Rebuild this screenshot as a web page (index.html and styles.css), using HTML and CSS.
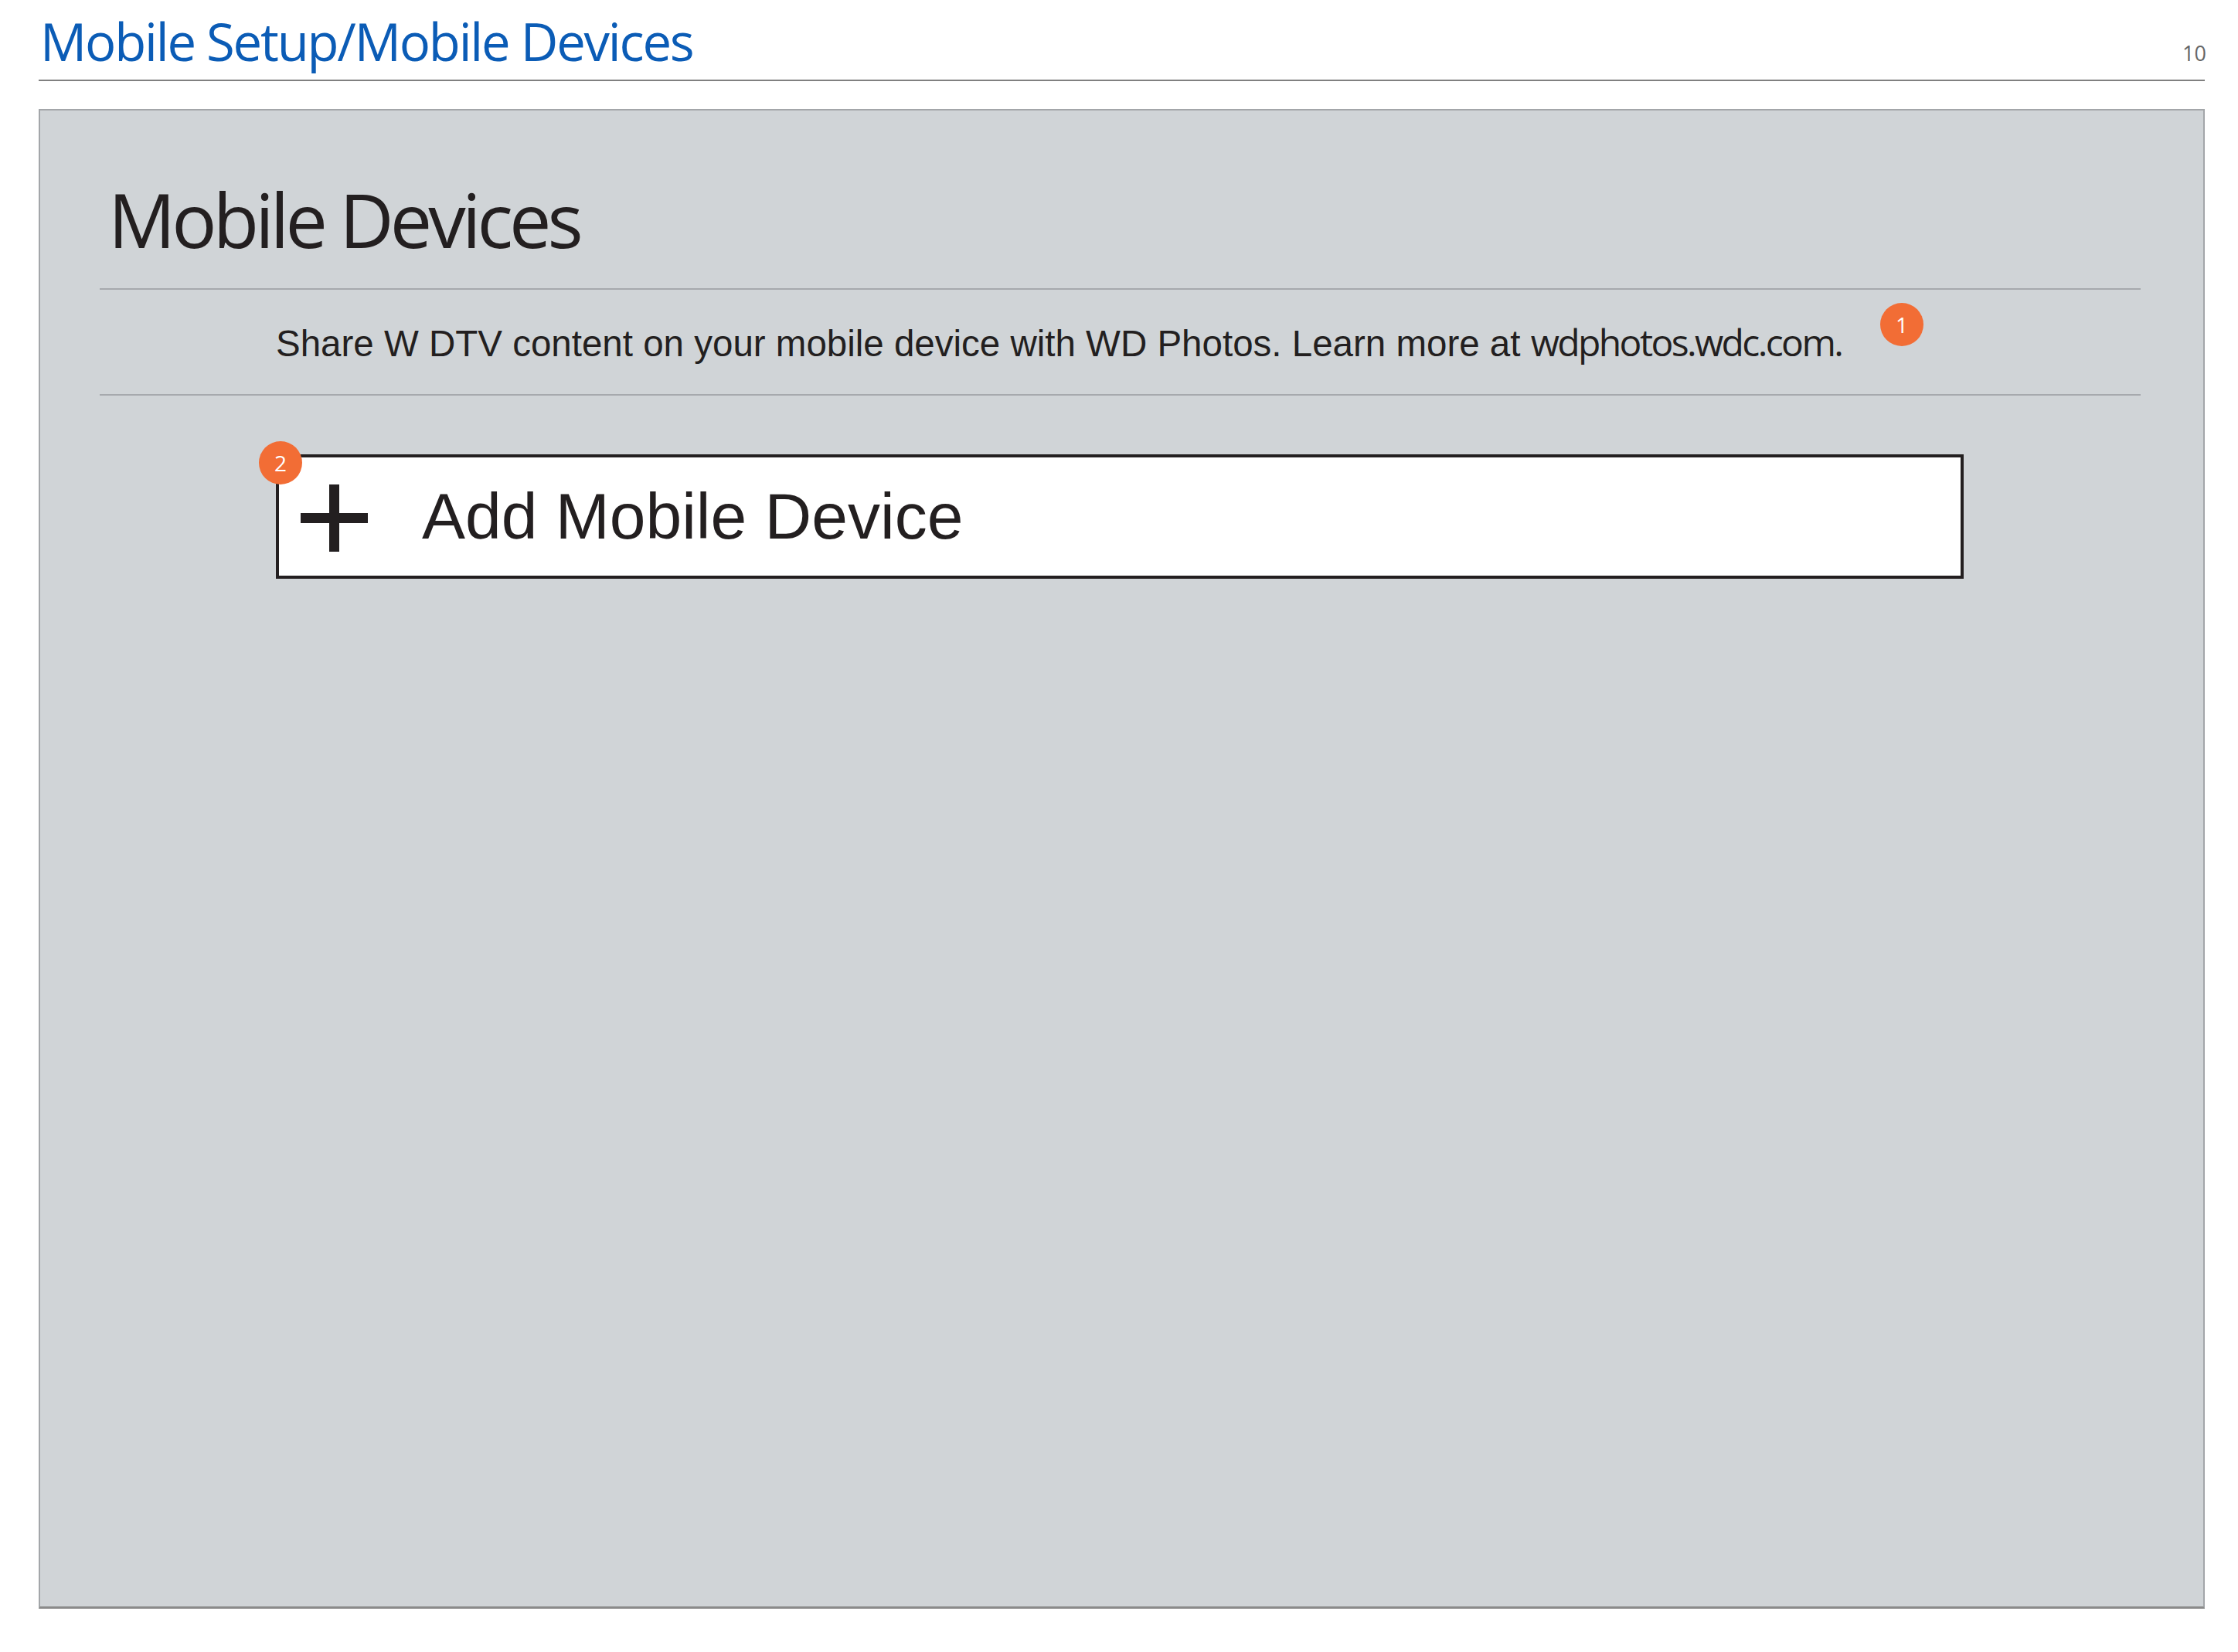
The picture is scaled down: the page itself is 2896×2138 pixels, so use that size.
FILE: index.html
```html
<!DOCTYPE html>
<html lang="en">
<head>
    <meta charset="UTF-8">
    <title>Mobile Setup/Mobile Devices</title>
    <link rel="stylesheet" href="styles.css">
</head>
<body>
    <div class="page">
        <div class="page-header">
            <h1 class="page-title">Mobile Setup/Mobile Devices</h1>
            <span class="page-num">10</span>
        </div>
        <div class="screen">
            <h2 class="screen-title">Mobile Devices</h2>
            <div class="info-row">
                <p class="info-text">Share W DTV content on your mobile device with WD Photos. Learn more at <span class="url">wdphotos.wdc.com.</span></p>
                <span class="callout">1</span>
            </div>
            <div class="add-row">
                <div class="add-btn">
                    <span class="callout callout-corner">2</span>
                    <svg class="plus" width="87" height="87" viewBox="0 0 87 87">
                        <rect x="37" y="0" width="13" height="87" fill="#231f20"/>
                        <rect x="0" y="37" width="87" height="13" fill="#231f20"/>
                    </svg>
                    <span class="add-label">Add Mobile Device</span>
                </div>
            </div>
        </div>
    </div>
</body>
</html>
```

FILE: styles.css
```css
* {
    box-sizing: border-box;
}
body {
    margin: 0;
    background-color: #fff;
}
.page {
    padding: 0 43px 0 50px;
}
.page-header {
    display: flex;
    justify-content: space-between;
    align-items: baseline;
    padding: 13px 0 10px 2px;
    border-bottom: 2px solid #808080;
}
.page-title {
    margin: 0;
    font-family: "Open Sans", sans-serif;
    font-weight: 400;
    font-size: 67px;
    line-height: 80px;
    letter-spacing: -2.2px;
    color: #0b5cb6;
}
.page-num {
    font-family: "Open Sans", sans-serif;
    font-size: 27px;
    color: #666;
    margin-right: -2px;
}
.screen {
    margin-top: 36px;
    height: 1941px;
    background-color: #d0d4d7;
    border: 2px solid #a3a6a9;
    border-bottom: 3px solid #8a8a8a;
    padding: 0 81px 0 77px;
}
.screen-title {
    margin: 0;
    padding: 80px 0 30px 11px;
    font-family: "Open Sans", sans-serif;
    font-weight: 400;
    font-size: 97px;
    line-height: 120px;
    letter-spacing: -4.9px;
    color: #231f20;
    border-bottom: 2px solid #a6a9ad;
}
.info-row {
    display: flex;
    align-items: flex-start;
    gap: 54px;
    padding: 17px 0 37px 228px;
    border-bottom: 2px solid #a6a9ad;
}
.info-text {
    flex: 0 0 2022px;
    min-width: 0;
    margin: 23px 0 0;
    font-family: "Liberation Sans", Arial, sans-serif;
    font-size: 47.5px;
    line-height: 56px;
    color: #231f20;
    white-space: nowrap;
}
.url {
    font-family: "Open Sans", sans-serif;
    font-size: 48px;
    letter-spacing: -2.6px;
}
.callout {
    display: flex;
    align-items: center;
    justify-content: center;
    width: 56px;
    height: 56px;
    border-radius: 50%;
    background-color: #f26d35;
    color: #fff;
    font-family: "Open Sans", sans-serif;
    font-size: 28px;
    flex: none;
}
.add-row {
    padding: 76px 0 0 228px;
}
.add-btn {
    position: relative;
    display: flex;
    align-items: center;
    width: 2184px;
    height: 161px;
    background-color: #fff;
    border: 4px solid #231f20;
    padding-left: 28px;
}
.callout-corner {
    position: absolute;
    left: -26px;
    top: -21px;
}
.plus {
    flex: none;
    margin-top: 3px;
}
.add-label {
    margin-left: 70px;
    font-family: "Liberation Sans", Arial, sans-serif;
    font-size: 84px;
    color: #231f20;
}
```
